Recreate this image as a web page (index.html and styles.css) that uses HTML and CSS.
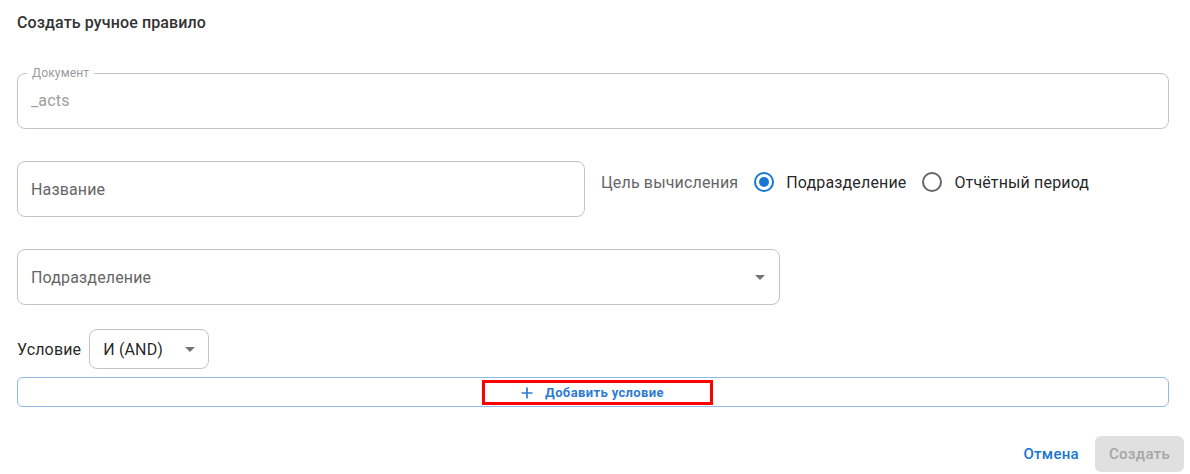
FILE: index.html
```html
<!DOCTYPE html>
<html lang="ru">
<head>
<meta charset="utf-8">
<title>Создать ручное правило</title>
<link rel="stylesheet" href="styles.css">
</head>
<body>
<div class="dialog">
  <h2 class="title">Создать ручное правило</h2>
  <div class="content">
    <div class="field field-doc">
      <span class="float-label">Документ</span>
      <span class="value disabled">_acts</span>
    </div>

    <div class="row row-name">
      <div class="field field-name">
        <span class="placeholder">Название</span>
      </div>
      <div class="radio-group">
        <span class="group-label">Цель вычисления</span>
        <label class="radio-item">
          <span class="radio checked"><span class="dot"></span></span>
          <span class="radio-text">Подразделение</span>
        </label>
        <label class="radio-item">
          <span class="radio"></span>
          <span class="radio-text">Отчётный период</span>
        </label>
      </div>
    </div>

    <div class="field field-select">
      <span class="placeholder">Подразделение</span>
      <span class="caret"></span>
    </div>

    <div class="row row-cond">
      <span class="cond-label">Условие</span>
      <div class="small-select">
        <span class="small-value">И (AND)</span>
        <span class="caret"></span>
      </div>
    </div>

    <button class="add-btn" type="button">
      <span class="add-inner">
        <svg class="plus" width="12" height="12" viewBox="0 0 12 12"><path d="M6 0.5v11M0.5 6h11" stroke="#2f7bd0" stroke-width="1.7" fill="none"/></svg>
        <span>Добавить условие</span>
      </span>
    </button>
  </div>
  <div class="actions">
    <button class="btn-text" type="button">Отмена</button>
    <button class="btn-disabled" type="button" disabled>Создать</button>
  </div>
</div>
</body>
</html>
```

FILE: styles.css
```css
* { box-sizing: border-box; }
html, body {
  margin: 0;
  padding: 0;
  background: #fff;
  font-family: Roboto, "Liberation Sans", Arial, sans-serif;
  color: rgba(0,0,0,0.87);
}
.dialog {
  width: 1190px;
  height: 474px;
  padding: 0 6px 0 17px;
}
.title {
  margin: 0;
  padding-top: 12px;
  font-size: 16px;
  line-height: 22px;
  font-weight: 500;
  letter-spacing: 0.12px;
  color: #333;
}
.content {
  padding-right: 15px;
  padding-top: 39px;
  display: flex;
  flex-direction: column;
}
.field {
  position: relative;
  border: 1px solid #c4c4c4;
  border-radius: 8px;
  height: 56px;
  display: flex;
  align-items: center;
  padding: 0 13px;
  font-size: 16px;
  letter-spacing: 0.15px;
}
.field-doc { width: 100%; }
.float-label {
  position: absolute;
  left: 9px;
  top: -8px;
  padding: 0 5px;
  background: #fff;
  font-size: 12px;
  line-height: 14px;
  letter-spacing: 0.15px;
  color: #9a9a9a;
}
.value.disabled {
  color: #9e9e9e;
  margin-top: -1px;
}
.placeholder { color: #666; }
.row {
  display: flex;
}
.row-name {
  margin-top: 32px;
  align-items: flex-start;
}
.field-name { width: 568px; flex: none; }
.radio-group {
  margin-left: 16px;
  height: 42px;
  display: flex;
  align-items: center;
  font-size: 16px;
  letter-spacing: 0.15px;
}
.group-label { color: #666; margin-right: 16px; }
.radio-item {
  display: flex;
  align-items: center;
  margin-right: 16px;
  color: rgba(0,0,0,0.87);
}
.radio {
  width: 20px;
  height: 20px;
  border-radius: 50%;
  border: 2px solid #666;
  display: flex;
  align-items: center;
  justify-content: center;
  margin-right: 12px;
}
.radio.checked { border-color: #1976d2; }
.radio .dot {
  width: 10px;
  height: 10px;
  border-radius: 50%;
  background: #1976d2;
}
.field-select {
  margin-top: 32px;
  width: 763px;
  justify-content: space-between;
  padding-right: 14px;
}
.caret {
  width: 0;
  height: 0;
  border-left: 5px solid transparent;
  border-right: 5px solid transparent;
  border-top: 5px solid #757575;
}
.row-cond {
  margin-top: 24px;
  align-items: center;
}
.cond-label {
  font-size: 16px;
  letter-spacing: 0.15px;
  color: rgba(0,0,0,0.87);
  margin-right: 8px;
}
.small-select {
  width: 120px;
  height: 40px;
  border: 1px solid #c4c4c4;
  border-radius: 8px;
  display: flex;
  align-items: center;
  justify-content: space-between;
  padding: 0 13px 0 13px;
  font-size: 16px;
  letter-spacing: 0.15px;
}
.add-btn {
  margin-top: 8px;
  width: 100%;
  height: 30px;
  border: 1px solid #8ebbe9;
  border-radius: 6px;
  background: #fff;
  display: flex;
  align-items: center;
  justify-content: center;
  padding: 0 0 0 9px;
  font-family: inherit;
}
.add-inner {
  width: 231px;
  height: 25px;
  margin-top: 1px;
  border: 3px solid #f00;
  display: flex;
  align-items: center;
  justify-content: center;
  gap: 12px;
  font-size: 13px;
  font-weight: 700;
  letter-spacing: 0.37px;
  color: #2f7bd0;
  padding-right: 10px;
}
.plus { display: block; }
.actions {
  margin-top: 29px;
  display: flex;
  justify-content: flex-end;
  gap: 8px;
}
.btn-text, .btn-disabled {
  height: 36px;
  border: none;
  border-radius: 6px;
  font-family: inherit;
  font-size: 15px;
  font-weight: 500;
  letter-spacing: 0.3px;
  padding: 0 8px;
  background: none;
}
.btn-text { color: #1976d2; }
.btn-disabled {
  width: 89px;
  background: #e0e0e0;
  color: #a6a6a6;
}
```
